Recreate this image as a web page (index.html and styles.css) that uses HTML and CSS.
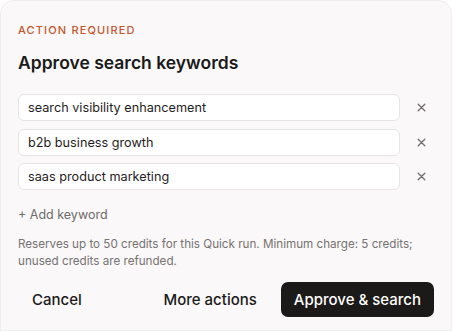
FILE: index.html
```html
<!DOCTYPE html>
<html>
<head>
<meta charset="utf-8">
<link rel="stylesheet" href="styles.css">
</head>
<body>
<div class="card">
  <div class="eyebrow">ACTION REQUIRED</div>
  <h1 class="title">Approve search keywords</h1>
  <div class="list">
    <div class="row">
      <div class="input">search visibility enhancement</div>
      <button class="remove" aria-label="Remove">
        <svg width="9" height="9" viewBox="0 0 9 9"><path d="M1.2 1.2L7.8 7.8M7.8 1.2L1.2 7.8" stroke="#716d6d" stroke-width="1.3" stroke-linecap="round"/></svg>
      </button>
    </div>
    <div class="row">
      <div class="input">b2b business growth</div>
      <button class="remove" aria-label="Remove">
        <svg width="9" height="9" viewBox="0 0 9 9"><path d="M1.2 1.2L7.8 7.8M7.8 1.2L1.2 7.8" stroke="#716d6d" stroke-width="1.3" stroke-linecap="round"/></svg>
      </button>
    </div>
    <div class="row">
      <div class="input">saas product marketing</div>
      <button class="remove" aria-label="Remove">
        <svg width="9" height="9" viewBox="0 0 9 9"><path d="M1.2 1.2L7.8 7.8M7.8 1.2L1.2 7.8" stroke="#716d6d" stroke-width="1.3" stroke-linecap="round"/></svg>
      </button>
    </div>
  </div>
  <div class="add">+ Add keyword</div>
  <p class="note">Reserves up to 50 credits for this Quick run. Minimum charge: 5 credits; unused credits are refunded.</p>
  <div class="footer">
    <button class="btn ghost">Cancel</button>
    <div class="right">
      <button class="btn ghost">More actions</button>
      <button class="btn primary">Approve &amp; search</button>
    </div>
  </div>
</div>
</body>
</html>
```

FILE: styles.css
```css
* { box-sizing: border-box; }
html, body { margin: 0; padding: 0; background: #ffffff; }
body { font-family: Inter, "Noto Sans", sans-serif; color: #1b1a1a; }
.card {
  background: #faf8f8;
  border: 1px solid #efecec;
  border-radius: 14px 14px 0 0;
  height: 331px;
  padding: 22px 17px 0 17px;
}
.eyebrow {
  font-size: 11px;
  letter-spacing: 1.15px;
  color: #c4552c;
  font-weight: 500;
  line-height: 14px;
}
.title {
  margin: 15px 0 0 0;
  font-size: 17.5px;
  font-weight: 600;
  line-height: 22px;
  letter-spacing: 0;
}
.list {
  margin-top: 20px;
  display: flex;
  flex-direction: column;
  gap: 7.5px;
}
.row { display: flex; align-items: center; gap: 8px; }
.input {
  flex: 1;
  height: 27px;
  background: #ffffff;
  border: 1px solid #e7e4e4;
  border-radius: 6px;
  padding: 0 9px;
  display: flex;
  align-items: center;
  font-size: 12.7px;
  color: #1f1e1e;
}
.remove {
  width: 26px;
  height: 26px;
  border: 0;
  background: transparent;
  padding: 0;
  display: flex;
  align-items: center;
  justify-content: center;
}
.add {
  margin-top: 17px;
  font-size: 12.5px;
  color: #6f6c6c;
  line-height: 16px;
}
.note {
  margin: 13px 0 0 0;
  font-size: 11.65px;
  line-height: 17px;
  color: #777373;
}
.footer {
  margin-top: 12px;
  display: flex;
  justify-content: space-between;
  align-items: center;
}
.right { display: flex; gap: 10px; }
.btn {
  height: 35px;
  border-radius: 7px;
  font-family: Inter, "Noto Sans", sans-serif;
  font-size: 15px;
  font-weight: 500;
  border: 0;
  padding: 0 14px;
  cursor: pointer;
}
.ghost { background: transparent; color: #1b1a1a; }
.primary { background: #1c1a19; color: #ffffff; padding: 0 13px; }
```
